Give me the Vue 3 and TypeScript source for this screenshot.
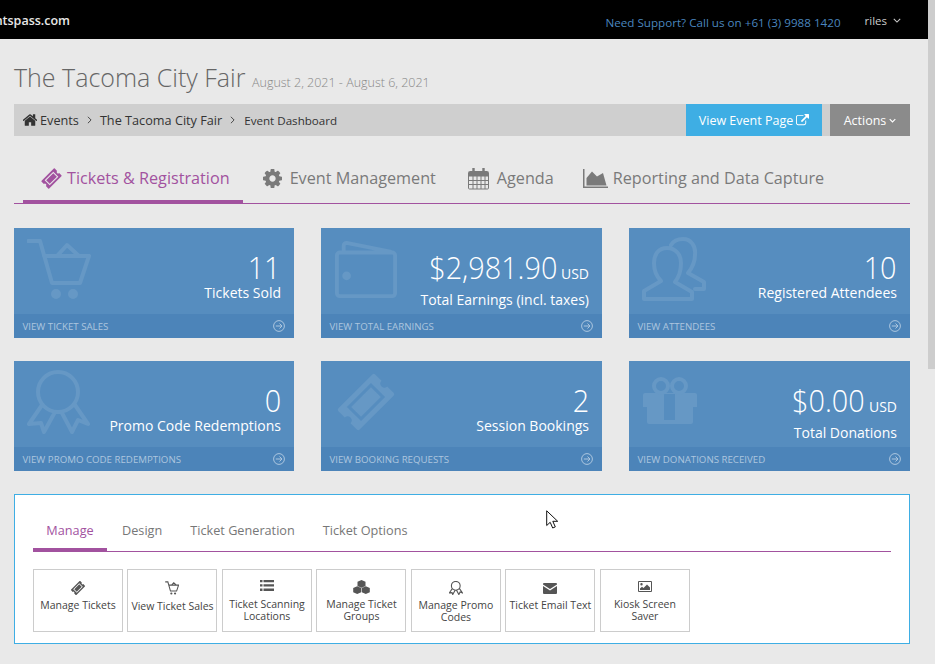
<script setup lang="ts">
interface Part { d: string; s?: number; t?: string; odd?: boolean }
interface Icon { vb: string; parts: Part[] }

const circle = (x: number, y: number, r: number): string =>
  `M${x - r} ${y}a${r} ${r} 0 1 0 ${2 * r} 0a${r} ${r} 0 1 0 ${-2 * r} 0z`

const ticketPath =
  'M8 17H56a2 2 0 0 1 2 2V28a4 4 0 0 0 0 8V45a2 2 0 0 1-2 2H8a2 2 0 0 1-2-2V36a4 4 0 0 0 0-8V19a2 2 0 0 1 2-2z' +
  'M15 22V42H49V22zM18 25H46V39H18z'

const ticket: Icon = { vb: '0 0 64 64', parts: [{ d: ticketPath, t: 'rotate(-45 32 32)', odd: true }] }

const icons: Record<string, Icon> = {
  ticket,
  cart: {
    vb: '0 0 64 64',
    parts: [
      { d: 'M1 4H13L25 46H53L62 19H17M30 19L40 8L52 19', s: 4 },
      { d: circle(29, 57, 5) + circle(46, 57, 5) }
    ]
  },
  wallet: {
    vb: '0 0 66 64',
    parts: [
      { d: 'M6 15H60a3 3 0 0 1 3 3V57a3 3 0 0 1-3 3H6a3 3 0 0 1-3-3V18a3 3 0 0 1 3-3zM10 15V8a3 3 0 0 1 3-3L58 14', s: 4 },
      { d: circle(13, 39, 4.5) }
    ]
  },
  people: {
    vb: '0 0 64 64',
    parts: [
      {
        d: 'M25 11C16 11 12 18 12 26C12 34 15 40 19 44L2 54V62H50V55L33 45C37 40 39 33 39 26C39 18 34 11 25 11ZM29 8C32 3 37 2 41 2C49 2 54 9 53 18C53 25 50 31 46 36L62 45V52H53',
        s: 4
      }
    ]
  },
  ribbon: {
    vb: '0 0 64 64',
    parts: [
      {
        d: circle(31, 22, 20) + 'M15 35L2 54L14 53L17 62L28 42M48 35L61 54L51 50L45 62L35 43',
        s: 4
      }
    ]
  },
  gift: {
    vb: '0 0 64 64',
    parts: [
      {
        d: 'M3 23H53a2 2 0 0 1 2 2V37H51V52a2 2 0 0 1-2 2H7a2 2 0 0 1-2-2V37H1V25a2 2 0 0 1 2-2zM22 24V50H33V24z',
        odd: true
      },
      { d: circle(19, 16, 7) + circle(37, 16, 7), s: 4 }
    ]
  },
  cog: {
    vb: '128 128 1536 1536',
    parts: [
      {
        d: 'M1152 896q0-106-75-181t-181-75-181 75-75 181 75 181 181 75 181-75 75-181zm512-109v222q0 12-8 23t-20 13l-185 28q-19 54-39 91 35 50 107 138 10 12 10 25t-9 23q-27 37-99 108t-94 71q-12 0-26-9l-138-108q-44 23-91 38-16 136-29 186-7 28-36 28h-222q-14 0-24.5-8.5t-11.5-21.5l-28-184q-49-16-90-37l-141 107q-10 9-25 9-14 0-25-11-126-114-165-168-7-10-7-23 0-12 8-23 15-21 51-66.5t54-70.5q-27-50-41-99l-183-27q-13-2-21-12.5t-8-23.5v-222q0-12 8-23t19-13l186-28q14-46 39-92-40-57-107-138-10-12-10-24 0-10 9-23 26-36 98.5-107.5t94.5-71.5q13 0 26 10l138 107q44-23 91-38 16-136 29-186 7-28 36-28h222q14 0 24.5 8.5t11.5 21.5l28 184q49 16 90 37l142-107q9-9 24-9 13 0 25 10 129 119 165 170 7 8 7 22 0 12-8 23-15 21-51 66.5t-54 70.5q26 50 41 98l183 28q13 2 21 12.5t8 23.5z'
      }
    ]
  },
  calendar: {
    vb: '0 0 21 23',
    parts: [
      { d: 'M1.5 4.5H19.5a1 1 0 0 1 1 1V21a1 1 0 0 1-1 1H1.5a1 1 0 0 1-1-1V5.500a1 1 0 0 1 1-1z M.5 9H20.500M5 9V22M9 9V22M13 9V22M17 9V22M.5 13.500H20.500M.5 17.500H20.500', s: 1 },
      { d: 'M1 5H20V9H1z' },
      { d: 'M5.500 1V6M15.500 1V6', s: 2.4 }
    ]
  },
  chart: {
    vb: '0 0 25 19',
    parts: [{ d: 'M0 0H1.500V17.500H25V19H0zM3.500 16.500V9L9 2.500L14 7.500L20 4L23.500 16.500z' }]
  },
  list: {
    vb: '0 0 14 11',
    parts: [{ d: 'M0 0H2.500V2.300H0zM3.500 0H14V2.300H3.500zM0 4.300H2.500V6.600H0zM3.500 4.300H14V6.600H3.500zM0 8.600H2.500V11H0zM3.500 8.600H14V11H3.500z' }]
  },
  cubes: {
    vb: '0 0 17 14',
    parts: [
      {
        d: 'M8.500 0L12.500 1.700V6L8.500 7.700L4.500 6V1.700zM4.200 6.300L8.200 8V12.300L4.200 14L.200 12.300V8zM12.800 6.300L16.800 8V12.300L12.800 14L8.800 12.300V8z'
      }
    ]
  },
  envelope: {
    vb: '0 0 14 11',
    parts: [{ d: 'M0 1a1 1 0 0 1 1-1H13a1 1 0 0 1 1 1V1.500L7 6L0 1.500zM0 3L7 7.500L14 3V10a1 1 0 0 1-1 1H1a1 1 0 0 1-1-1z' }]
  },
  picture: {
    vb: '0 0 14 11',
    parts: [
      { d: 'M.5.5H13.500V10.500H.5z', s: 1 },
      { d: circle(3.5, 3.2, 1.2) + 'M2 9V7.500L4 5.700L5.500 7L9 3.500L12 6.500V9z' }
    ]
  }
}

const tabs = [
  { label: 'Tickets & Registration', icon: 'ticket', w: 23, h: 23, gap: 4, ml: 0, active: true },
  { label: 'Event Management', icon: 'cog', w: 19, h: 19, gap: 8, ml: 0, active: false },
  { label: 'Agenda', icon: 'calendar', w: 21, h: 23, gap: 8, ml: 0, active: false },
  { label: 'Reporting and Data Capture', icon: 'chart', w: 25, h: 19, gap: 5, ml: -3, active: false }
]

const cards = [
  { value: '11', unit: '', label: 'Tickets Sold', link: 'View Ticket Sales', icon: 'cart' },
  { value: '$2,981.90', unit: 'USD', label: 'Total Earnings (incl. taxes)', link: 'View Total Earnings', icon: 'wallet' },
  { value: '10', unit: '', label: 'Registered Attendees', link: 'View Attendees', icon: 'people' },
  { value: '0', unit: '', label: 'Promo Code Redemptions', link: 'View Promo Code Redemptions', icon: 'ribbon' },
  { value: '2', unit: '', label: 'Session Bookings', link: 'View Booking Requests', icon: 'ticket' },
  { value: '$0.00', unit: 'USD', label: 'Total Donations', link: 'View Donations Received', icon: 'gift' }
]

const subTabs = ['Manage', 'Design', 'Ticket Generation', 'Ticket Options']

const tiles = [
  { label: 'Manage Tickets', icon: 'ticket', w: 16, h: 16, top: 0, textTop: 1 },
  { label: 'View Ticket Sales', icon: 'cart', w: 14, h: 14, top: 1, textTop: 2 },
  { label: 'Ticket Scanning Locations', icon: 'list', w: 14, h: 11, top: 0, textTop: 0 },
  { label: 'Manage Ticket Groups', icon: 'cubes', w: 17, h: 14, top: 0, textTop: 0 },
  { label: 'Manage Promo Codes', icon: 'ribbon', w: 14, h: 14, top: 1, textTop: 1 },
  { label: 'Ticket Email Text', icon: 'envelope', w: 14, h: 11, top: 3, textTop: 1 },
  { label: 'Kiosk Screen Saver', icon: 'picture', w: 14, h: 11, top: 1, textTop: 0 }
]
</script>

<template>
  <div class="shell">
    <div class="main">
      <header class="top">
        <div class="logo"><span>eventspass.com</span></div>
        <a class="support">Need Support? Call us on +61 (3) 9988 1420</a>
        <span class="user">riles
          <svg class="chev" viewBox="0 0 10 6" width="8" height="5"><path d="M1 1L5 5L9 1" fill="none" stroke="currentColor" stroke-width="1.300" /></svg>
        </span>
      </header>

      <div class="page">
        <h1 class="title">The Tacoma City Fair <small>August 2, 2021 - August 6, 2021</small></h1>

        <div class="crumbbar">
          <nav class="crumbs">
            <svg class="home" viewBox="128 256 1536 1280" width="14" height="12">
              <path fill="currentColor" d="M1472 992v480q0 26-19 45t-45 19h-384v-384h-256v384h-384q-26 0-45-19t-19-45v-480q0-1 .5-3t.5-3l575-474 575 474q1 2 1 6zm223-69l-62 74q-8 9-21 11h-3q-13 0-21-7l-692-577-692 577q-12 8-24 7-13-2-21-11l-62-74q-8-10-7-23.5t11-21.5l719-599q32-26 76-26t76 26l244 204v-195q0-14 9-23t23-9h192q14 0 23 9t9 23v408l219 182q10 8 11 21.5t-7 23.5z" />
            </svg>
            <span>Events</span>
            <svg class="sep" viewBox="0 0 6 10" width="5" height="8"><path d="M1 1L5 5L1 9" fill="none" stroke="currentColor" stroke-width="1.200" /></svg>
            <span>The Tacoma City Fair</span>
            <svg class="sep" viewBox="0 0 6 10" width="5" height="8"><path d="M1 1L5 5L1 9" fill="none" stroke="currentColor" stroke-width="1.200" /></svg>
            <span class="current">Event Dashboard</span>
          </nav>
          <a class="btn btn-view">View Event Page
            <svg viewBox="0 0 1792 1792" width="13" height="13"><path fill="currentColor" d="M1408 928v320q0 119-84.500 203.500t-203.500 84.500h-832q-119 0-203.500-84.500t-84.500-203.500v-832q0-119 84.500-203.500t203.500-84.500h704q14 0 23 9t9 23v64q0 14-9 23t-23 9h-704q-66 0-113 47t-47 113v832q0 66 47 113t113 47h832q66 0 113-47t47-113v-320q0-14 9-23t23-9h64q14 0 23 9t9 23zm384-864v512q0 26-19 45t-45 19-45-19l-176-176-652 652q-10 10-23 10t-23-10l-114-114q-10-10-10-23t10-23l652-652-176-176q-19-19-19-45t19-45 45-19h512q26 0 45 19t19 45z" /></svg>
          </a>
          <a class="btn btn-actions">Actions
            <svg viewBox="0 0 10 6" width="7" height="5"><path d="M1 1L5 5L9 1" fill="none" stroke="currentColor" stroke-width="1.600" /></svg>
          </a>
        </div>

        <nav class="tabs">
          <a v-for="tab in tabs" :key="tab.label" class="tab" :class="{ active: tab.active }" :style="{ marginLeft: tab.ml + 'px' }">
            <svg :viewBox="icons[tab.icon].vb" :width="tab.w" :height="tab.h" :style="{ marginRight: tab.gap + 'px' }">
              <path
                v-for="(p, i) in icons[tab.icon].parts"
                :key="i"
                :d="p.d"
                :transform="p.t"
                :fill="p.s ? 'none' : 'currentColor'"
                :fill-rule="p.odd ? 'evenodd' : undefined"
                :stroke="p.s ? 'currentColor' : undefined"
                :stroke-width="p.s"
              />
            </svg>
            <span>{{ tab.label }}</span>
          </a>
        </nav>

        <section class="cards">
          <article v-for="card in cards" :key="card.link" class="card">
            <div class="card-body" :class="{ 'with-unit': card.unit }">
              <svg class="card-icon" :viewBox="icons[card.icon].vb" width="64" height="64">
                <path
                  v-for="(p, i) in icons[card.icon].parts"
                  :key="i"
                  :d="p.d"
                  :transform="p.t"
                  :fill="p.s ? 'none' : 'currentColor'"
                  :fill-rule="p.odd ? 'evenodd' : undefined"
                  :stroke="p.s ? 'currentColor' : undefined"
                  :stroke-width="p.s"
                  stroke-linejoin="round"
                  stroke-linecap="round"
                />
              </svg>
              <div class="stat">
                <div class="value"><span class="num">{{ card.value }}</span><small v-if="card.unit">{{ card.unit }}</small></div>
                <div class="label">{{ card.label }}</div>
              </div>
            </div>
            <a class="card-foot">
              <span>{{ card.link }}</span>
              <svg viewBox="0 0 12 12" width="12" height="12">
                <circle cx="6" cy="6" r="5.400" fill="none" stroke="currentColor" />
                <path d="M2.800 6H9M6.500 3.500L9 6L6.500 8.500" fill="none" stroke="currentColor" />
              </svg>
            </a>
          </article>
        </section>

        <section class="panel">
          <nav class="subtabs">
            <a v-for="(t, i) in subTabs" :key="t" class="subtab" :class="{ active: i === 0 }">{{ t }}</a>
          </nav>
          <div class="tiles">
            <a v-for="tile in tiles" :key="tile.label" class="tile">
              <span class="tile-icon">
                <svg :viewBox="icons[tile.icon].vb" :width="tile.w" :height="tile.h" :style="{ marginTop: tile.top + 'px' }">
                  <path
                    v-for="(p, i) in icons[tile.icon].parts"
                    :key="i"
                    :d="p.d"
                    :transform="p.t"
                    :fill="p.s ? 'none' : 'currentColor'"
                    :fill-rule="p.odd ? 'evenodd' : undefined"
                    :stroke="p.s ? 'currentColor' : undefined"
                    :stroke-width="p.s ? (icons[tile.icon].vb === '0 0 64 64' ? 5 : p.s) : undefined"
                  />
                </svg>
              </span>
              <span class="tile-text" :style="{ marginTop: tile.textTop + 'px' }">{{ tile.label }}</span>
            </a>
          </div>
          <svg class="cursor" viewBox="0 0 13 19" width="13" height="19">
            <path d="M.7.8V15.500L4.200 12.300L6.700 18L9.300 16.900L6.800 11.300H11.700z" fill="#fff" stroke="#111" stroke-width="1" />
          </svg>
        </section>
      </div>
    </div>
    <div class="scrollbar"><div class="thumb"></div></div>
  </div>
</template>

<style>
html, body { margin: 0; background: #e9e9e9; overflow: hidden; }
</style>

<style scoped>
.shell {
  display: flex;
  height: 664px;
  overflow: hidden;
  background: #e9e9e9;
  font-family: "Open Sans", "Liberation Sans", sans-serif;
  color: #333;
}
.main { flex: 1; min-width: 0; }
.scrollbar { width: 7px; background: #e9e9e9; }
.thumb { height: 369px; background: #cdcdcd; }

.top {
  height: 39px;
  background: #000;
  display: flex;
  align-items: center;
  font-size: 11.650px;
}
.logo {
  width: 70px;
  display: flex;
  justify-content: flex-end;
  overflow: hidden;
  white-space: nowrap;
  color: #e8e8e8;
  font-size: 12.500px;
  font-weight: 600;
  flex: none;
  padding-top: 2px;
}
.logo span { flex: none; }
.support { margin-left: auto; color: #4a86bf; padding-top: 5px; }
.user {
  margin-left: 24px;
  margin-right: 27px;
  color: #ccc;
  font-size: 11.500px;
  display: flex;
  align-items: center;
  gap: 6px;
  padding-top: 2px;
}

.page { padding: 0 18px 0 14px; }
.title {
  margin: 0;
  padding-top: 20px;
  height: 45px;
  font-size: 25px;
  line-height: 36px;
  font-weight: 300;
  color: #666;
  white-space: nowrap;
}
.title small { font-size: 12.500px; color: #888; font-weight: 300; }

.crumbbar {
  display: flex;
  height: 32px;
  background: #cfcfcf;
  font-size: 12.700px;
  align-items: stretch;
}
.crumbs {
  display: flex;
  align-items: center;
  flex: 1;
  padding-left: 9px;
  color: #333;
}
.current { font-size: 11.600px; margin-left: 1px; }
.home { margin-right: 3px; }
.sep { margin: 0 8px; color: #444; }
.btn {
  display: flex;
  align-items: center;
  justify-content: center;
  gap: 3px;
  color: #fff;
  font-size: 12.500px;
}
.btn-view { width: 136px; background: #3eaee4; margin-right: 8px; }
.btn-actions { width: 80px; background: #8b8b8b; }

.tabs {
  display: flex;
  margin-top: 17px;
  height: 50px;
  padding-left: 9px;
  border-bottom: 1px solid #a2529f;
}
.tab {
  display: flex;
  align-items: center;
  height: 44px;
  padding: 3px 13px 0 17px;
  margin-right: 2px;
  font-size: 16.200px;
  color: #7a7a7a;
  border-bottom: 3px solid transparent;
}
.tab svg { flex: none; }
.tab.active {
  color: #a2529f;
  border-bottom-color: #a2529f;
  margin-right: 3px;
}

.cards {
  display: grid;
  grid-template-columns: 280px 281px 281px;
  column-gap: 27px;
  row-gap: 23px;
  margin-top: 24px;
}
.card {
  height: 110px;
  background: #568dbf;
  display: flex;
  flex-direction: column;
  overflow: hidden;
}
.card-body {
  flex: 1;
  display: flex;
  justify-content: space-between;
  padding: 9px 13px 0 13px;
  min-height: 0;
}
.card-icon { flex: none; color: #6698c5; }
.stat { text-align: right; color: #fff; }
.value {
  font-size: 32px;
  font-weight: 300;
  line-height: 34px;
  height: 34px;
  white-space: nowrap;
  margin-top: 13px;
}
.num { display: inline-block; transform: scaleX(0.9); transform-origin: right center; }
.value small { font-size: 14px; line-height: 14px; font-weight: 400; margin-left: 4px; }
.label { font-size: 14px; line-height: 16px; margin-top: 1px; white-space: nowrap; }
.with-unit .label { margin-top: 8px; }
.card-foot {
  height: 24px;
  flex: none;
  background: #4c84b9;
  display: flex;
  align-items: center;
  justify-content: space-between;
  padding: 0 9px 0 8.500px;
  color: #acc6df;
  font-size: 9.700px;
  text-transform: uppercase;
}

.panel {
  position: relative;
  margin-top: 23px;
  height: 150px;
  box-sizing: border-box;
  background: #fff;
  border: 1px solid #3eaee4;
  padding: 0 18px;
}
.subtabs {
  display: flex;
  height: 57px;
  border-bottom: 1px solid #a2529f;
  box-sizing: border-box;
  gap: 2px;
}
.subtab {
  padding: 13px 13px 0;
  height: 57px;
  box-sizing: border-box;
  display: flex;
  align-items: center;
  font-size: 12.700px;
  color: #777;
}
.subtab.active {
  color: #a2529f;
  border-bottom: 4px solid #a2529f;
  padding-top: 17px;
  min-width: 74px;
  justify-content: center;
}
.tiles { display: flex; gap: 4.490px; margin-top: 17px; }
.tile {
  width: 90px;
  height: 63px;
  box-sizing: border-box;
  border: 1px solid #ccc;
  background: #fff;
  display: flex;
  flex-direction: column;
  align-items: center;
  padding: 10px 0 0;
  color: #555;
  text-align: center;
}
.tile-icon {
  height: 18px;
  display: flex;
  align-items: flex-start;
  justify-content: center;
  flex: none;
}
.tile-text { font-size: 10.500px; line-height: 12px; color: #444; }
.cursor { position: absolute; left: 531px; top: 15px; }
</style>
